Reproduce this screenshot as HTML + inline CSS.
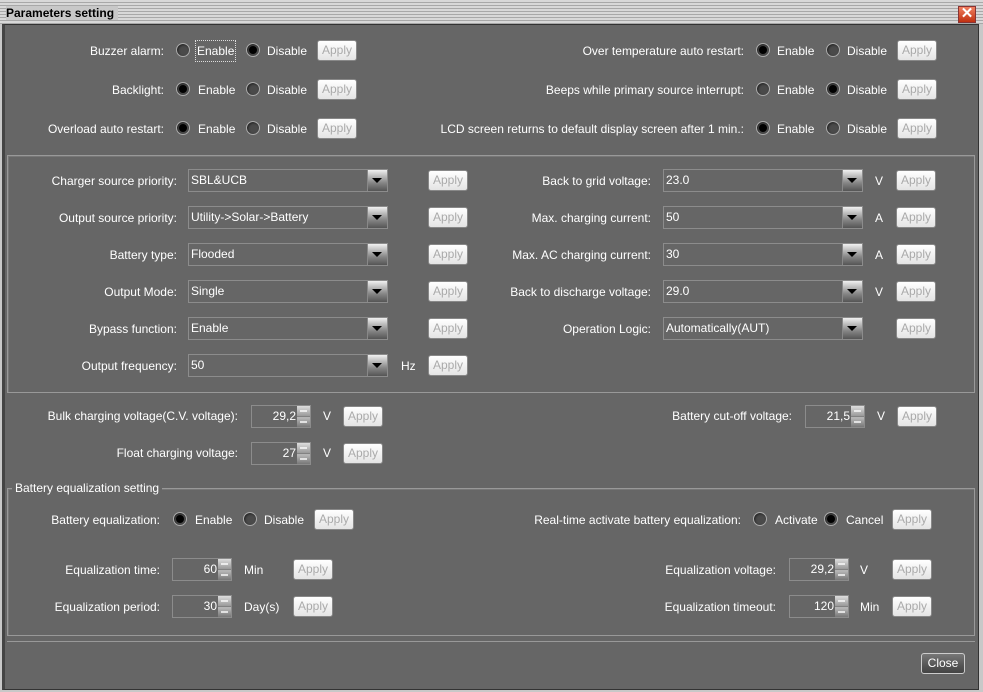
<!DOCTYPE html>
<html><head><meta charset="utf-8"><style>
*{box-sizing:border-box;margin:0;padding:0}
body{width:983px;height:692px;overflow:hidden;background:#c8c8c8;font-family:"Liberation Sans",Arial,sans-serif;font-size:12px;color:#fff;position:relative}
.abs{position:absolute}
#title{left:0;top:0;width:983px;height:24px;background:repeating-linear-gradient(#d8d8d8 0 2px,#a8a8a8 2px 3px);}
#title span{position:absolute;left:6px;top:6px;color:#000;font-weight:bold;font-size:12px;background:#c8c8c8;padding-right:4px}
#win{left:2px;top:24px;width:977px;height:666px;background:#666;border:1px solid #333;border-left:3px solid #444}
.t{position:absolute;line-height:20px;height:20px;white-space:nowrap;top:1px}
.r{position:absolute;width:14px;height:14px;border-radius:50%;background:#4a4a4a;border:1px solid #aaa;box-shadow:inset 1px 1px 2px #222}
.r.on::after{content:"";position:absolute;left:2px;top:2px;width:8px;height:8px;border-radius:50%;background:#000}
.ap{position:absolute;width:40px;height:21px;border:1px solid #888;border-radius:3px;background:linear-gradient(#fff,#e4e4e4);color:#aaa;text-align:center;line-height:19px}
.cb{position:absolute;width:200px;height:23px;border:1px solid #8c8c8c;background:#666;padding-left:2px;line-height:21px}
.cb::after{content:"";position:absolute;right:0;top:0;width:19px;height:21px;background:linear-gradient(#f0f0f0,#888 60%,#555);border-left:1px solid #888}
.cb::before{content:"";position:absolute;right:5px;top:8px;border-left:5px solid transparent;border-right:5px solid transparent;border-top:5px solid #000;z-index:2}
.sp{position:absolute;width:60px;height:23px;border:1px solid #8c8c8c;background:#666;text-align:right;padding-right:14px;line-height:21px}
.sp::after{content:"";position:absolute;right:0;top:0;width:13px;height:21px;background:linear-gradient(#ddd,#999 48%,#666 50%,#bbb 54%,#777)}
.sp::before{content:"";position:absolute;right:3px;top:4px;width:7px;height:13px;z-index:2;background:linear-gradient(#fff 0 2px,transparent 2px 11px,#fff 11px);opacity:.7}
.box{position:absolute;border:1px solid #999;box-shadow:inset 1px 1px 0 #777}
</style></head><body>
<div id="title" class="abs"><span>Parameters setting</span></div>
<div class="abs" style="left:958px;top:6px;width:18px;height:17px;background:linear-gradient(#f08060,#c03010);border:1px solid #833;color:#fff;font-weight:bold;font-size:15px;line-height:14px;text-align:center">✕</div>
<div id="win" class="abs"></div>
<div class="box" style="left:7px;top:155px;width:968px;height:238px"></div>
<div class="box" style="left:7px;top:488px;width:968px;height:148px"></div>
<div class="abs" style="left:7px;top:641px;width:968px;height:1px;background:#999"></div>
<div class="t" style="left:12px;top:478px;background:#666;padding:0 3px">Battery equalization setting</div>

<div class="t" style="right:819px;top:41px">Buzzer alarm:</div>
<div class="r" style="left:176px;top:43px"></div><div class="t" style="left:196px;top:41px;outline:1px dotted #ddd;padding:0 1px">Enable</div>
<div class="r on" style="left:246px;top:43px"></div><div class="t" style="left:267px;top:41px">Disable</div><div class="ap" style="left:317px;top:40px">Apply</div>
<div class="t" style="right:819px;top:80px">Backlight:</div>
<div class="r on" style="left:176px;top:82px"></div><div class="t" style="left:198px;top:80px">Enable</div>
<div class="r" style="left:246px;top:82px"></div><div class="t" style="left:267px;top:80px">Disable</div><div class="ap" style="left:317px;top:79px">Apply</div>
<div class="t" style="right:819px;top:119px">Overload auto restart:</div>
<div class="r on" style="left:176px;top:121px"></div><div class="t" style="left:198px;top:119px">Enable</div>
<div class="r" style="left:246px;top:121px"></div><div class="t" style="left:267px;top:119px">Disable</div><div class="ap" style="left:317px;top:118px">Apply</div>

<div class="t" style="right:239px;top:41px">Over temperature auto restart:</div>
<div class="r on" style="left:756px;top:43px"></div><div class="t" style="left:777px;top:41px">Enable</div>
<div class="r" style="left:826px;top:43px"></div><div class="t" style="left:847px;top:41px">Disable</div><div class="ap" style="left:897px;top:40px">Apply</div>
<div class="t" style="right:239px;top:80px">Beeps while primary source interrupt:</div>
<div class="r" style="left:756px;top:82px"></div><div class="t" style="left:777px;top:80px">Enable</div>
<div class="r on" style="left:826px;top:82px"></div><div class="t" style="left:847px;top:80px">Disable</div><div class="ap" style="left:897px;top:79px">Apply</div>
<div class="t" style="right:239px;top:119px">LCD screen returns to default display screen after 1 min.:</div>
<div class="r on" style="left:756px;top:121px"></div><div class="t" style="left:777px;top:119px">Enable</div>
<div class="r" style="left:826px;top:121px"></div><div class="t" style="left:847px;top:119px">Disable</div><div class="ap" style="left:897px;top:118px">Apply</div>

<div class="t" style="right:806px;top:171px">Charger source priority:</div><div class="cb" style="left:188px;top:169px">SBL&amp;UCB</div><div class="ap" style="left:428px;top:170px">Apply</div>
<div class="t" style="right:806px;top:208px">Output source priority:</div><div class="cb" style="left:188px;top:206px">Utility-&gt;Solar-&gt;Battery</div><div class="ap" style="left:428px;top:207px">Apply</div>
<div class="t" style="right:806px;top:245px">Battery type:</div><div class="cb" style="left:188px;top:243px">Flooded</div><div class="ap" style="left:428px;top:244px">Apply</div>
<div class="t" style="right:806px;top:282px">Output Mode:</div><div class="cb" style="left:188px;top:280px">Single</div><div class="ap" style="left:428px;top:281px">Apply</div>
<div class="t" style="right:806px;top:319px">Bypass function:</div><div class="cb" style="left:188px;top:317px">Enable</div><div class="ap" style="left:428px;top:318px">Apply</div>
<div class="t" style="right:806px;top:356px">Output frequency:</div><div class="cb" style="left:188px;top:354px">50</div><div class="t" style="left:401px;top:356px">Hz</div><div class="ap" style="left:428px;top:355px">Apply</div>

<div class="t" style="right:332px;top:171px">Back to grid voltage:</div><div class="cb" style="left:663px;top:169px">23.0</div><div class="t" style="left:875px;top:171px">V</div><div class="ap" style="left:896px;top:170px">Apply</div>
<div class="t" style="right:332px;top:208px">Max. charging current:</div><div class="cb" style="left:663px;top:206px">50</div><div class="t" style="left:875px;top:208px">A</div><div class="ap" style="left:896px;top:207px">Apply</div>
<div class="t" style="right:332px;top:245px">Max. AC charging current:</div><div class="cb" style="left:663px;top:243px">30</div><div class="t" style="left:875px;top:245px">A</div><div class="ap" style="left:896px;top:244px">Apply</div>
<div class="t" style="right:332px;top:282px">Back to discharge voltage:</div><div class="cb" style="left:663px;top:280px">29.0</div><div class="t" style="left:875px;top:282px">V</div><div class="ap" style="left:896px;top:281px">Apply</div>
<div class="t" style="right:332px;top:319px">Operation Logic:</div><div class="cb" style="left:663px;top:317px">Automatically(AUT)</div><div class="ap" style="left:896px;top:318px">Apply</div>

<div class="t" style="right:745px;top:406px">Bulk charging voltage(C.V. voltage):</div><div class="sp" style="left:251px;top:405px">29,2</div><div class="t" style="left:323px;top:406px">V</div><div class="ap" style="left:343px;top:406px">Apply</div>
<div class="t" style="right:745px;top:443px">Float charging voltage:</div><div class="sp" style="left:251px;top:442px">27</div><div class="t" style="left:323px;top:443px">V</div><div class="ap" style="left:343px;top:443px">Apply</div>
<div class="t" style="right:191px;top:406px">Battery cut-off voltage:</div><div class="sp" style="left:805px;top:405px">21,5</div><div class="t" style="left:877px;top:406px">V</div><div class="ap" style="left:897px;top:406px">Apply</div>

<div class="t" style="right:823px;top:510px">Battery equalization:</div>
<div class="r on" style="left:173px;top:512px"></div><div class="t" style="left:195px;top:510px">Enable</div>
<div class="r" style="left:243px;top:512px"></div><div class="t" style="left:264px;top:510px">Disable</div><div class="ap" style="left:314px;top:509px">Apply</div>
<div class="t" style="right:242px;top:510px">Real-time activate battery equalization:</div>
<div class="r" style="left:753px;top:512px"></div><div class="t" style="left:775px;top:510px">Activate</div>
<div class="r on" style="left:824px;top:512px"></div><div class="t" style="left:846px;top:510px">Cancel</div><div class="ap" style="left:892px;top:509px">Apply</div>

<div class="t" style="right:823px;top:560px">Equalization time:</div><div class="sp" style="left:172px;top:558px">60</div><div class="t" style="left:244px;top:560px">Min</div><div class="ap" style="left:293px;top:559px">Apply</div>
<div class="t" style="right:823px;top:597px">Equalization period:</div><div class="sp" style="left:172px;top:595px">30</div><div class="t" style="left:244px;top:597px">Day(s)</div><div class="ap" style="left:293px;top:596px">Apply</div>
<div class="t" style="right:207px;top:560px">Equalization voltage:</div><div class="sp" style="left:789px;top:558px">29,2</div><div class="t" style="left:860px;top:560px">V</div><div class="ap" style="left:892px;top:559px">Apply</div>
<div class="t" style="right:207px;top:597px">Equalization timeout:</div><div class="sp" style="left:789px;top:595px">120</div><div class="t" style="left:860px;top:597px">Min</div><div class="ap" style="left:892px;top:596px">Apply</div>

<div class="ap" style="left:921px;top:653px;width:44px;height:21px;background:linear-gradient(#777,#555 60%,#444);border-color:#ccc;color:#fff">Close</div>
</body></html>
